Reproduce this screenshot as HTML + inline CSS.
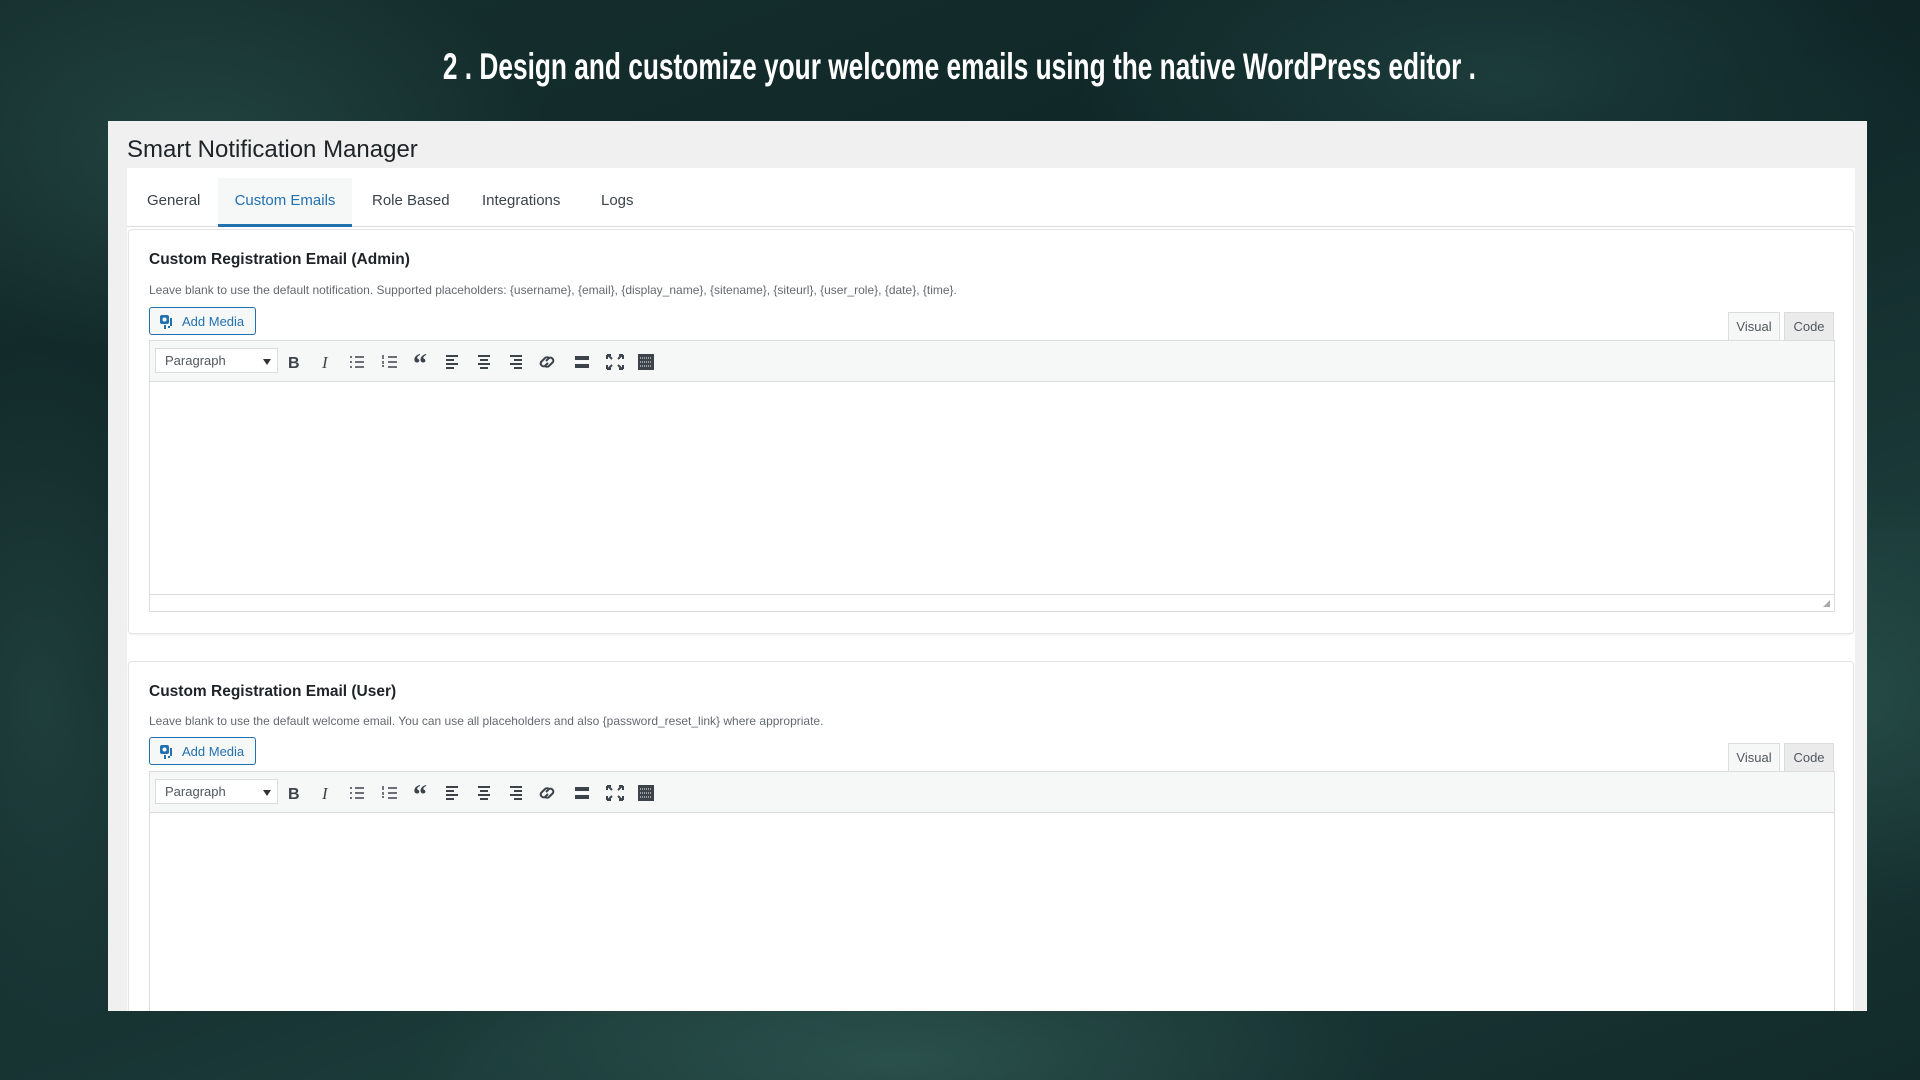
<!DOCTYPE html>
<html><head><meta charset="utf-8"><style>
*{box-sizing:border-box;margin:0;padding:0}
body{width:1920px;height:1080px;overflow:hidden;position:relative;font-family:"Liberation Sans",sans-serif;
background:
radial-gradient(ellipse 500px 300px at 200px 150px,rgba(60,110,100,.35),transparent 70%),
radial-gradient(ellipse 600px 250px at 1500px 80px,rgba(50,100,95,.35),transparent 70%),
radial-gradient(ellipse 700px 200px at 900px 1060px,rgba(70,120,110,.4),transparent 70%),
radial-gradient(ellipse 400px 300px at 1850px 700px,rgba(60,110,100,.35),transparent 70%),
radial-gradient(ellipse 300px 500px at 40px 700px,rgba(60,110,100,.35),transparent 70%),
linear-gradient(160deg,#16302f,#0f2526 40%,#1b3b39 70%,#122a2a);}
.hl{position:absolute;top:46px;left:0;width:1920px;text-align:center;color:#fff;font-weight:bold;font-size:37px;transform:scaleX(0.71);transform-origin:958px 0;white-space:nowrap}
.panel{position:absolute;left:108px;top:121px;width:1759px;height:890px;background:#f0f0f1;overflow:hidden}
.title{position:absolute;left:19px;top:15px;font-size:24px;color:#1d2327}
.wrap{position:absolute;left:19px;top:47px;width:1728px;height:900px;background:#fff}
.tabs{position:absolute;left:0;top:0;width:1728px;height:59px;border-bottom:1px solid #dcdcde}
.tab{position:absolute;top:24px;font-size:15px;color:#3c434a}
.tab.act{top:10px;left:91px;width:134px;height:49px;background:#f6f7f7;border-bottom:3px solid #2271b1;color:#2271b1;text-align:center;padding-top:14px}
.card{position:absolute;left:1px;width:1726px;background:#fff;border:1px solid #e4e4e6;border-radius:4px;box-shadow:0 1px 2px rgba(0,0,0,.06)}
.h{position:absolute;left:20px;font-size:15.5px;font-weight:bold;color:#1d2327}
.d{position:absolute;left:20px;font-size:12px;color:#646970}
.btn{position:absolute;left:20px;width:107px;height:28px;border:1px solid #2271b1;border-radius:3px;color:#2271b1;font-size:13px;padding:6px 0 0 32px;background:#f6f7f7}
.btn svg{position:absolute;left:9px;top:6px}
.vt{position:absolute;height:28px;font-size:13px;color:#50575e;border:1px solid #dcdcde;border-bottom:none;background:#f6f7f7;text-align:center;padding-top:6px}
.vt.c{background:#ebebeb}
.tb{position:absolute;left:20px;width:1686px;height:42px;background:#f6f7f7;border:1px solid #dcdcde}
.sel{position:absolute;left:5px;top:7px;width:123px;height:25px;border:1px solid #dcdcde;background:#fff;font-size:13px;color:#50575e;padding:4px 0 0 9px}
.sel:after{content:"";position:absolute;right:6px;top:10px;border:4px solid transparent;border-top:6px solid #333}
.tb svg{position:absolute;left:130px;top:10px}
.ed{position:absolute;left:20px;width:1686px;background:#fff;border:1px solid #dcdcde;border-top:none}
.st{position:absolute;left:0;bottom:0;width:100%;height:17px;border-top:1px solid #dcdcde;background:#fff}
</style></head><body>
<div class="hl">2 . Design and customize your welcome emails using the native WordPress editor .</div>
<div class="panel">
<div class="title">Smart Notification Manager</div>
<div class="wrap">
<div class="tabs">
<span class="tab" style="left:20px">General</span>
<div class="tab act">Custom Emails</div>
<span class="tab" style="left:245px">Role Based</span>
<span class="tab" style="left:355px">Integrations</span>
<span class="tab" style="left:474px">Logs</span>
</div>

<div class="card" style="top:61px;height:405px">
<div class="h" style="top:21px">Custom Registration Email (Admin)</div>
<div class="d" style="top:53px">Leave blank to use the default notification. Supported placeholders: {username}, {email}, {display_name}, {sitename}, {siteurl}, {user_role}, {date}, {time}.</div>
<div class="btn" style="top:77px"><svg width="16" height="16" viewBox="0 0 16 16"><rect x="1" y="1" width="9" height="9" rx="2" fill="#2271b1"/><circle cx="5.5" cy="5.5" r="2" fill="#fff"/><path d="M12 4v8M11 13h-2M6 11v4" stroke="#2271b1" stroke-width="2"/></svg>Add Media</div>
<div class="vt" style="left:1599px;top:82px;width:52px">Visual</div>
<div class="vt c" style="left:1655px;top:82px;width:50px">Code</div>
<div class="tb" style="top:110px"><div class="sel">Paragraph</div>
<svg width="410" height="22" viewBox="0 0 410 22" fill="none" stroke="#3c434a" stroke-width="2">
<text x="8" y="17" font-family="Liberation Sans" font-weight="bold" font-size="16" fill="#3c434a" stroke="none">B</text>
<text x="42" y="17" font-family="Liberation Serif" font-style="italic" font-size="17" fill="#3c434a" stroke="none">I</text>
<path d="M70 6h2M70 11h2M70 16h2M75 6h9M75 11h9M75 16h9" stroke-width="1.6"/>
<path d="M103 4v4M103 10v3M102 15h2M108 6h9M108 11h9M108 16h9" stroke-width="1.4"/>
<text x="133" y="22" font-family="Liberation Serif" font-weight="bold" font-size="28" fill="#3c434a" stroke="none">“</text>
<path d="M166 5h12M166 9h8M166 13h12M166 17h8"/>
<path d="M198 5h12M200 9h8M198 13h12M200 17h8"/>
<path d="M230 5h12M234 9h8M230 13h12M234 17h8"/>
<path d="M268 12l-3 3a3 3 0 0 1-4-4l4-4a3 3 0 0 1 4 0M266 10l3-3a3 3 0 0 1 4 4l-4 4a3 3 0 0 1-4 0"/>
<path d="M295 5h14v4h-14zM295 13h14v4h-14z" fill="#3c434a" stroke="none"/><path d="M295 11h14" stroke="#fff" stroke-dasharray="2 1"/>
<path d="M328 4l4 4M342 4l-4 4M328 18l4-4M342 18l-4-4M327 4h4M327 4v4M343 4h-4M343 4v4M327 18h4M327 18v-4M343 18h-4M343 18v-4"/>
<rect x="358" y="3" width="16" height="16" fill="#3c434a" stroke="none"/><path d="M360 7h12M360 11h12M360 15h12" stroke="#fff" stroke-width="1" stroke-dasharray="1 1"/>
</svg></div>
<div class="ed" style="top:152px;height:230px"><div class="st"><svg style="position:absolute;right:3px;bottom:3px" width="9" height="9"><path d="M8 1v7H1z" fill="#aaa"/></svg></div></div>
</div>

<div class="card" style="top:493px;height:420px">
<div class="h" style="top:21px">Custom Registration Email (User)</div>
<div class="d" style="top:52px">Leave blank to use the default welcome email. You can use all placeholders and also {password_reset_link} where appropriate.</div>
<div class="btn" style="top:75px"><svg width="16" height="16" viewBox="0 0 16 16"><rect x="1" y="1" width="9" height="9" rx="2" fill="#2271b1"/><circle cx="5.5" cy="5.5" r="2" fill="#fff"/><path d="M12 4v8M11 13h-2M6 11v4" stroke="#2271b1" stroke-width="2"/></svg>Add Media</div>
<div class="vt" style="left:1599px;top:81px;width:52px">Visual</div>
<div class="vt c" style="left:1655px;top:81px;width:50px">Code</div>
<div class="tb" style="top:109px"><div class="sel">Paragraph</div>
<svg width="410" height="22" viewBox="0 0 410 22" fill="none" stroke="#3c434a" stroke-width="2">
<text x="8" y="17" font-family="Liberation Sans" font-weight="bold" font-size="16" fill="#3c434a" stroke="none">B</text>
<text x="42" y="17" font-family="Liberation Serif" font-style="italic" font-size="17" fill="#3c434a" stroke="none">I</text>
<path d="M70 6h2M70 11h2M70 16h2M75 6h9M75 11h9M75 16h9" stroke-width="1.6"/>
<path d="M103 4v4M103 10v3M102 15h2M108 6h9M108 11h9M108 16h9" stroke-width="1.4"/>
<text x="133" y="22" font-family="Liberation Serif" font-weight="bold" font-size="28" fill="#3c434a" stroke="none">“</text>
<path d="M166 5h12M166 9h8M166 13h12M166 17h8"/>
<path d="M198 5h12M200 9h8M198 13h12M200 17h8"/>
<path d="M230 5h12M234 9h8M230 13h12M234 17h8"/>
<path d="M268 12l-3 3a3 3 0 0 1-4-4l4-4a3 3 0 0 1 4 0M266 10l3-3a3 3 0 0 1 4 4l-4 4a3 3 0 0 1-4 0"/>
<path d="M295 5h14v4h-14zM295 13h14v4h-14z" fill="#3c434a" stroke="none"/><path d="M295 11h14" stroke="#fff" stroke-dasharray="2 1"/>
<path d="M328 4l4 4M342 4l-4 4M328 18l4-4M342 18l-4-4M327 4h4M327 4v4M343 4h-4M343 4v4M327 18h4M327 18v-4M343 18h-4M343 18v-4"/>
<rect x="358" y="3" width="16" height="16" fill="#3c434a" stroke="none"/><path d="M360 7h12M360 11h12M360 15h12" stroke="#fff" stroke-width="1" stroke-dasharray="1 1"/>
</svg></div>
<div class="ed" style="top:151px;height:300px"></div>
</div>
</div>
</div>
</body></html>
